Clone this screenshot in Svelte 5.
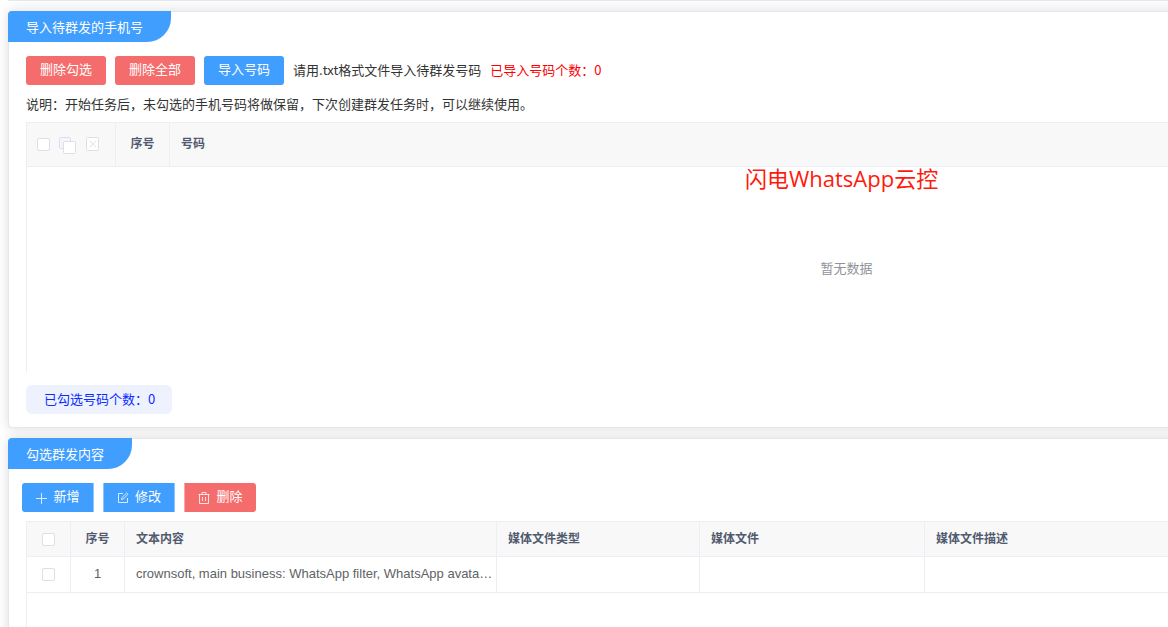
<script lang="ts">
  let selected = $state(0);
  let imported = $state(0);

  const rows = [
    { id: 1, text: 'crownsoft, main business: WhatsApp filter, WhatsApp avata…', type: '', file: '', desc: '' }
  ];
</script>

<main class="page">
  <div class="content">
    <section class="card previous"></section>

    <section class="card numbers">
      <h2>导入待群发的手机号</h2>
      <div class="toolbar">
        <button class="btn danger">删除勾选</button>
        <button class="btn danger">删除全部</button>
        <button class="btn primary">导入号码</button>
        <span class="hint">请用.txt格式文件导入待群发号码</span>
        <span class="imported">已导入号码个数：{imported}</span>
      </div>
      <p class="note">说明：开始任务后，未勾选的手机号码将做保留，下次创建群发任务时，可以继续使用。</p>

      <div class="grid phone-grid">
        <table>
          <colgroup>
            <col class="w-tools" />
            <col class="w-index" />
            <col />
          </colgroup>
          <thead>
            <tr>
              <th>
                <div class="tools">
                  <input type="checkbox" aria-label="全选" />
                  <button class="tool" aria-label="反选">
                    <svg width="18" height="18" viewBox="0 0 18 18">
                      <rect class="back" x="0.5" y="0.5" width="11" height="11" rx="1" />
                      <rect x="4.5" y="4.5" width="12" height="12" rx="1" />
                    </svg>
                  </button>
                  <button class="tool" aria-label="取消">
                    <svg width="14" height="14" viewBox="0 0 14 14">
                      <rect x="0.5" y="0.5" width="12" height="13" rx="1" />
                      <path d="M3.5 3.5l6.5 7M10 3.5l-6.5 7" />
                    </svg>
                  </button>
                </div>
              </th>
              <th class="center">序号</th>
              <th>号码</th>
            </tr>
          </thead>
        </table>
        <div class="empty">暂无数据</div>
        <div class="watermark">闪电WhatsApp云控</div>
      </div>

      <div class="selected">已勾选号码个数：{selected}</div>
    </section>

    <section class="card messages">
      <h2>勾选群发内容</h2>
      <div class="toolbar actions">
        <button class="btn primary first">
          <svg width="12" height="12" viewBox="0 0 12 12"><path d="M6.5 1v11M1 6.5h11" /></svg>
          新增
        </button>
        <button class="btn primary middle">
          <svg width="12" height="12" viewBox="0 0 12 12">
            <path d="M6 1.5H1.5v9h9V6" />
            <path d="M4.5 7.5l.4-1.8L9.6 1l1.4 1.3-4.7 4.8z" />
          </svg>
          修改
        </button>
        <button class="btn danger last">
          <svg width="12" height="12" viewBox="0 0 12 12">
            <path d="M.5 2.5h11M4 2.5v-2h4v2M1.5 2.5v9h9v-9M4.5 5v4M7.5 5v4" />
          </svg>
          删除
        </button>
      </div>

      <div class="grid message-grid">
        <table>
          <colgroup>
            <col class="w-check" />
            <col class="w-index" />
            <col class="w-text" />
            <col class="w-type" />
            <col class="w-file" />
            <col />
          </colgroup>
          <thead>
            <tr>
              <th class="center"><input type="checkbox" aria-label="全选" /></th>
              <th class="center">序号</th>
              <th>文本内容</th>
              <th>媒体文件类型</th>
              <th>媒体文件</th>
              <th>媒体文件描述</th>
            </tr>
          </thead>
          <tbody>
            {#each rows as row (row.id)}
              <tr>
                <td class="center"><input type="checkbox" aria-label="选择 {row.id}" /></td>
                <td class="center">{row.id}</td>
                <td class="text">{row.text}</td>
                <td>{row.type}</td>
                <td>{row.file}</td>
                <td>{row.desc}</td>
              </tr>
            {/each}
          </tbody>
        </table>
      </div>
    </section>
  </div>
</main>

<style>
  :global(body) {
    background: #fff;
  }

  .page {
    height: 100vh;
    overflow: hidden;
    font-family: "Noto Sans CJK SC", sans-serif;
    font-size: 13px;
    color: #333;
  }

  .content {
    min-width: 1676px;
    padding-left: 8px;
    display: flex;
    flex-direction: column;
    gap: 10px;
  }

  .card {
    box-sizing: border-box;
    background: #fff;
    border: 1px solid #e4e7ed;
    border-radius: 4px;
    box-shadow: 0 0 12px rgba(0, 0, 0, 0.14);
  }

  .previous {
    height: 1px;
    border-width: 0 0 1px;
    border-radius: 0;
  }

  .numbers {
    padding-bottom: 13px;
  }

  h2 {
    width: fit-content;
    margin: -1px 0 0 -1px;
    padding: 0 28px 0 18px;
    border-radius: 4px 0 24px 0;
    background: #409eff;
    color: #fff;
    font-size: 13px;
    font-weight: 400;
    line-height: 31px;
  }

  .toolbar {
    display: flex;
    align-items: center;
    gap: 9px;
    padding: 14px 17px 0;
    line-height: 28px;
  }

  .actions {
    padding-left: 13px;
  }

  .btn {
    display: flex;
    align-items: center;
    justify-content: center;
    height: 29px;
    padding: 0 14px 3px;
    border: 0;
    border-radius: 3px;
    font: inherit;
    line-height: 26px;
    color: #fff;
    cursor: pointer;
  }

  .actions .btn {
    width: 72px;
    gap: 6px;
    padding: 0 0 3px;
    white-space: nowrap;
  }

  .actions svg {
    margin-top: 3px;
    fill: none;
    stroke: #fff;
    stroke-width: 1;
    stroke-opacity: 0.8;
  }

  .primary {
    background: #409eff;
  }

  .danger {
    background: #f56c6c;
  }

  .first {
    border-radius: 3px 0 0 3px;
    border-right: 1px solid #8cc5ff;
  }

  .middle {
    border-radius: 0;
    border-left: 1px solid #8cc5ff;
    border-right: 1px solid #8cc5ff;
  }

  .last {
    border-radius: 0 3px 3px 0;
    border-left: 1px solid #f9a7a7;
  }

  .hint,
  .imported {
    padding-bottom: 1px;
  }

  .imported {
    color: #f00;
  }

  .note {
    margin: 9px 17px 8px;
    line-height: 20px;
  }

  .grid {
    position: relative;
    margin: 0 17px;
    border-top: 1px solid #ebeef5;
    border-left: 1px solid #ebeef5;
  }

  .phone-grid {
    height: 250px;
  }

  .message-grid {
    margin-top: 9px;
    min-height: 200px;
  }

  table {
    width: 100%;
    table-layout: fixed;
    border-collapse: separate;
    border-spacing: 0;
    font-size: 12px;
    line-height: 18px;
  }

  th,
  td {
    box-sizing: border-box;
    height: 36px;
    padding: 0 11px 2px;
    border-right: 1px solid #ebeef5;
    border-bottom: 1px solid #ebeef5;
    text-align: left;
    color: #606266;
  }

  th {
    height: 35px;
    padding-bottom: 3px;
    background: #f8f8f9;
    color: #515a6e;
    font-weight: 700;
  }

  td {
    font-family: "Liberation Sans", "Noto Sans CJK SC", sans-serif;
    font-size: 13px;
  }

  .phone-grid th {
    height: 44px;
  }

  th.center,
  td.center {
    padding-left: 0;
    padding-right: 0;
    text-align: center;
  }

  td.text {
    padding-right: 0;
    overflow: hidden;
    text-overflow: ellipsis;
    white-space: nowrap;
  }

  .w-tools {
    width: 89px;
  }

  .w-check {
    width: 44px;
  }

  .w-index {
    width: 54px;
  }

  .w-text {
    width: 372px;
  }

  .w-type {
    width: 203px;
  }

  .w-file {
    width: 225px;
  }

  input {
    appearance: none;
    box-sizing: border-box;
    width: 13px;
    height: 13px;
    margin: 0;
    border: 1px solid #dcdfe6;
    border-radius: 2px;
    background: #fff;
    vertical-align: middle;
  }

  .tools {
    display: flex;
    align-items: center;
    gap: 9px;
    margin-left: -1px;
    padding-top: 2px;
  }

  .tools input {
    flex: none;
  }

  .tool {
    display: flex;
    padding: 0;
    border: 0;
    background: none;
  }

  .tool svg {
    fill: #fff;
    stroke: #dcdfe6;
    stroke-width: 1;
  }

  .tool .back {
    fill: #f2f5fb;
  }

  .tool:first-of-type svg {
    margin-top: 4px;
  }

  .empty {
    line-height: 202px;
    text-align: center;
    color: #909399;
  }

  .watermark {
    position: absolute;
    top: 41px;
    left: 718px;
    font-family: "Open Sans", "Noto Sans CJK SC", sans-serif;
    font-size: 22px;
    line-height: 28px;
    color: #ff1a0d;
  }

  .selected {
    width: fit-content;
    margin: 12px 17px 0;
    padding: 0 17px 1px 18px;
    border-radius: 6px;
    background: #eef2ff;
    color: #0a2cff;
    line-height: 28px;
  }
</style>
